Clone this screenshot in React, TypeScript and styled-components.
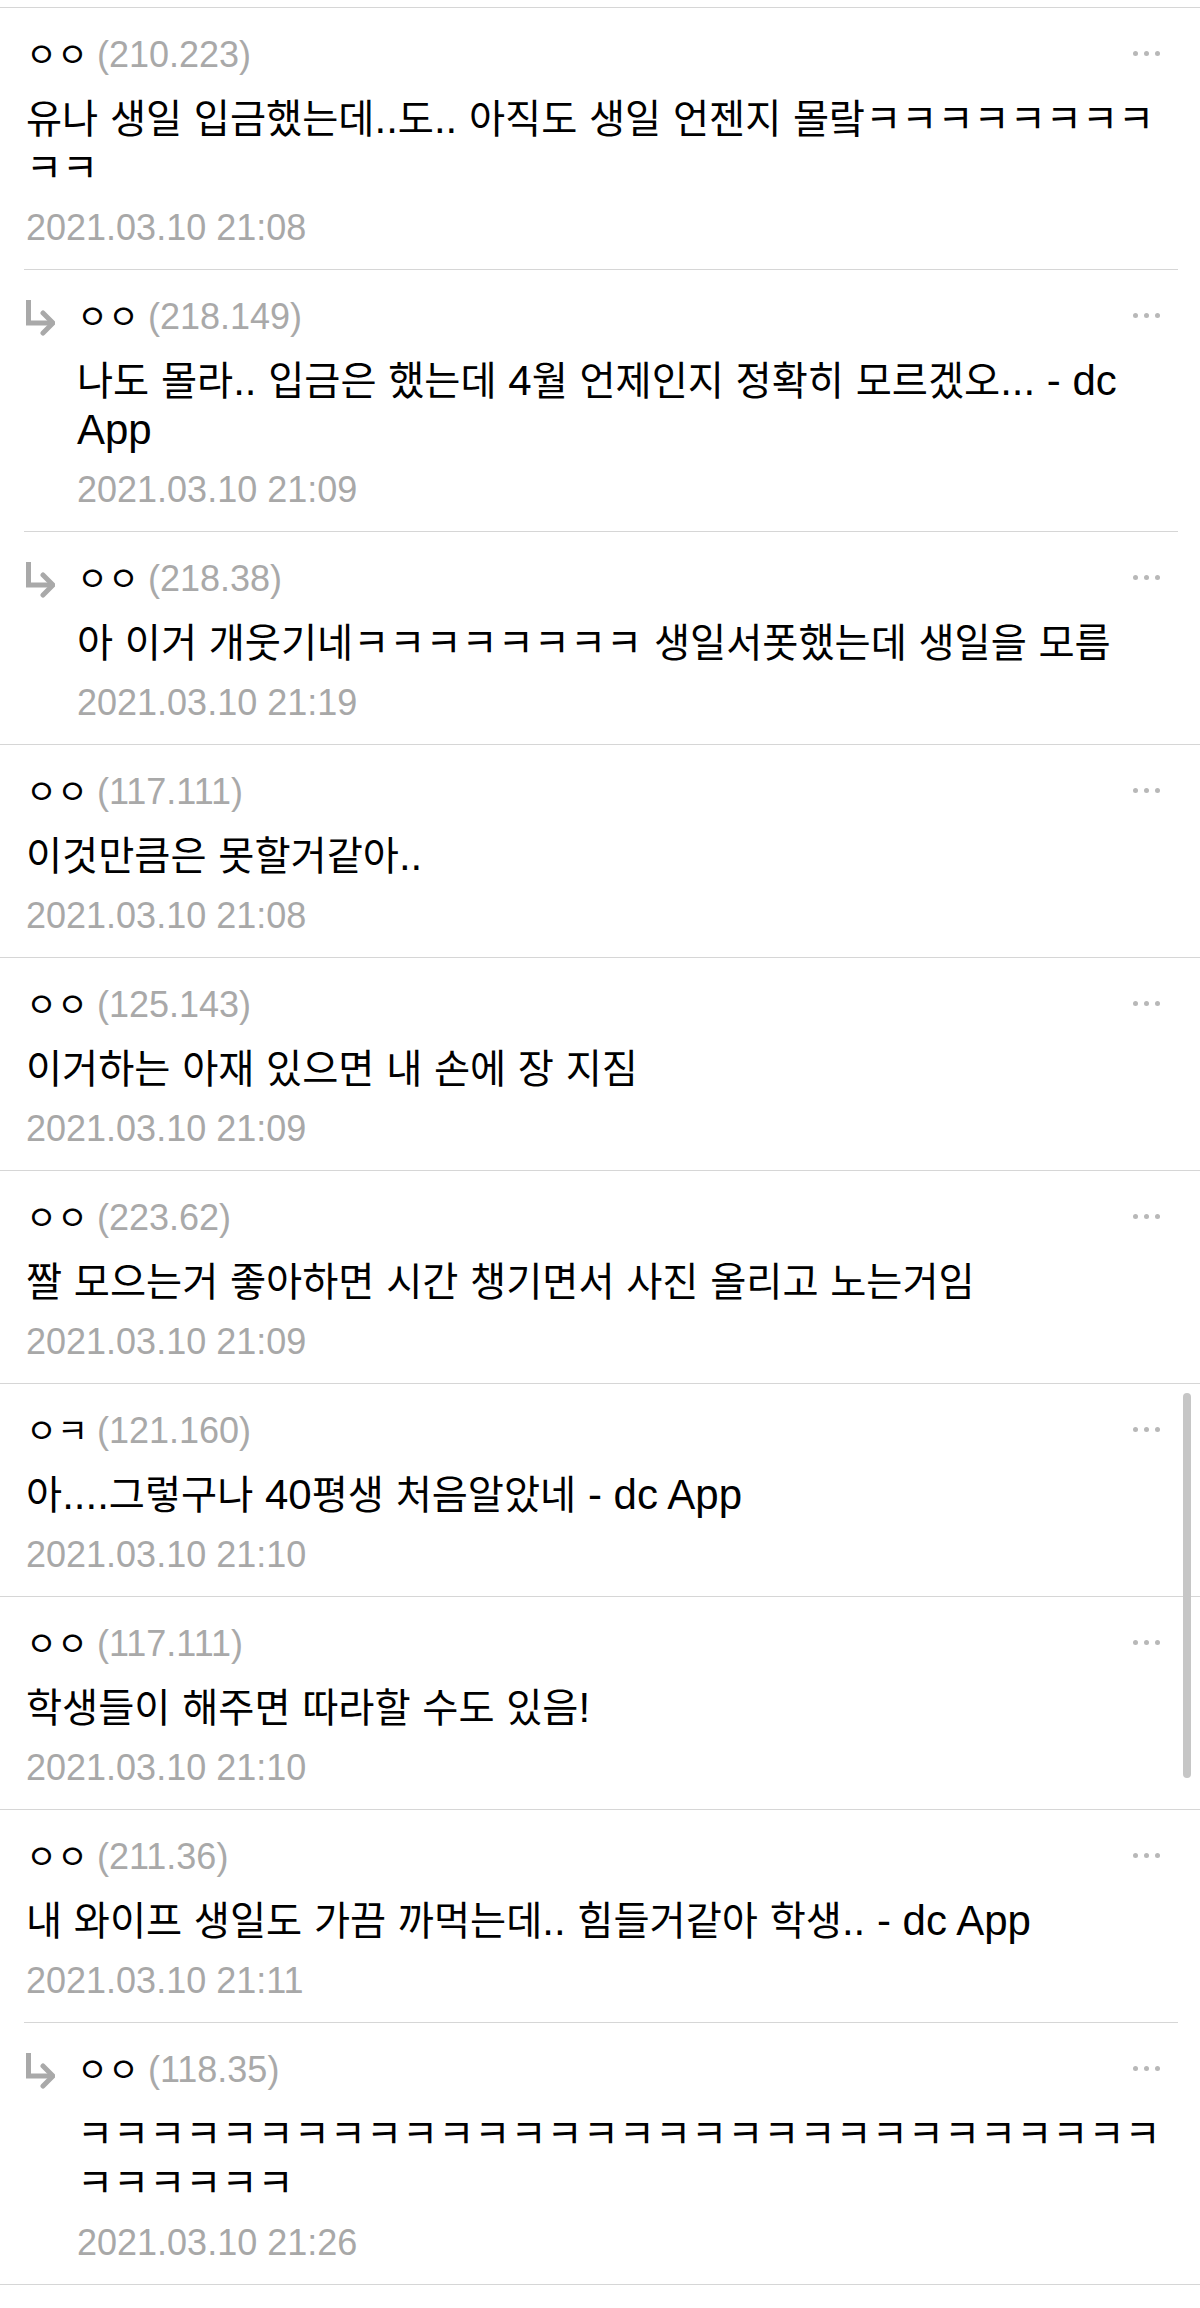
import styled, { createGlobalStyle } from "styled-components";

const GlobalStyle = createGlobalStyle`
  body {
    margin: 0;
    background: #fff;
    font-family: "Liberation Sans", "Noto Sans CJK KR", sans-serif;
    color: #000;
  }
`;

const Page = styled.div`
  position: relative;
  width: 1200px;
  min-height: 2308px;
  padding-top: 7px;
  box-sizing: border-box;
`;

const List = styled.ul`
  list-style: none;
  margin: 0;
  padding: 0;
  border-bottom: 1px solid #d6d6d6;
`;

const Item = styled.li<{ $reply?: boolean }>`
  display: flex;
  border-top: 1px solid #d6d6d6;
  margin: ${(p) => (p.$reply ? "0 22px 0 24px" : "0")};
  padding: ${(p) => (p.$reply ? "24px 14px 19px 0" : "24px 40px 19px 26px")};
`;

const ReplyMark = styled.div`
  flex: 0 0 52px;
  padding-left: 1px;
  padding-top: 6px;
  svg {
    display: block;
  }
`;

const Body = styled.div`
  flex: 1;
  min-width: 0;
`;

const Header = styled.div<{ $reply?: boolean }>`
  display: flex;
  align-items: center;
  height: 46px;
  font-size: 36px;
  line-height: 46px;
  padding-right: ${(p) => (p.$reply ? "4px" : "0")};
`;

const Name = styled.span`
  color: #000;
`;

const Ip = styled.span`
  margin-left: 9px;
  color: #a9a9a9;
`;

const More = styled.button`
  margin-left: auto;
  display: flex;
  gap: 6px;
  padding: 0;
  border: 0;
  background: none;
  margin-top: -4px;
  span {
    width: 5px;
    height: 5px;
    border-radius: 50%;
    background: #b8b8b8;
  }
`;

const Content = styled.p`
  margin: 16px 0 0;
  font-size: 42px;
  line-height: 49px;
  color: #000;
`;

const Hangul = styled.span`
  font-family: "Noto Sans CJK KR", sans-serif;
  font-size: 0.935em;
  line-height: 1;
`;

const Date = styled.div`
  margin-top: 14px;
  font-size: 36px;
  line-height: 44px;
  color: #a8a8a8;
`;

const Scrollbar = styled.div`
  position: absolute;
  left: 1183px;
  top: 1393px;
  width: 8px;
  height: 385px;
  border-radius: 4px;
  background: #c6c6c6;
`;

interface CommentData {
  name: string;
  ip: string;
  text: string;
  date: string;
  reply?: boolean;
}

const comments: CommentData[] = [
  {
    name: "ㅇㅇ",
    ip: "210.223",
    text: "유나 생일 입금했는데..도.. 아직도 생일 언젠지 몰랔ㅋㅋㅋㅋㅋㅋㅋㅋㅋㅋ",
    date: "2021.03.10 21:08",
  },
  {
    name: "ㅇㅇ",
    ip: "218.149",
    text: "나도 몰라.. 입금은 했는데 4월 언제인지 정확히 모르겠오... - dc App",
    date: "2021.03.10 21:09",
    reply: true,
  },
  {
    name: "ㅇㅇ",
    ip: "218.38",
    text: "아 이거 개웃기네ㅋㅋㅋㅋㅋㅋㅋㅋ 생일서폿했는데 생일을 모름",
    date: "2021.03.10 21:19",
    reply: true,
  },
  {
    name: "ㅇㅇ",
    ip: "117.111",
    text: "이것만큼은 못할거같아..",
    date: "2021.03.10 21:08",
  },
  {
    name: "ㅇㅇ",
    ip: "125.143",
    text: "이거하는 아재 있으면 내 손에 장 지짐",
    date: "2021.03.10 21:09",
  },
  {
    name: "ㅇㅇ",
    ip: "223.62",
    text: "짤 모으는거 좋아하면 시간 챙기면서 사진 올리고 노는거임",
    date: "2021.03.10 21:09",
  },
  {
    name: "ㅇㅋ",
    ip: "121.160",
    text: "아....그렇구나 40평생 처음알았네 - dc App",
    date: "2021.03.10 21:10",
  },
  {
    name: "ㅇㅇ",
    ip: "117.111",
    text: "학생들이 해주면 따라할 수도 있음!",
    date: "2021.03.10 21:10",
  },
  {
    name: "ㅇㅇ",
    ip: "211.36",
    text: "내 와이프 생일도 가끔 까먹는데.. 힘들거같아 학생.. - dc App",
    date: "2021.03.10 21:11",
  },
  {
    name: "ㅇㅇ",
    ip: "118.35",
    text: "ㅋ".repeat(36),
    date: "2021.03.10 21:26",
    reply: true,
  },
];

// hangul runs get their own span so the latin text keeps its size
function withHangul(text: string) {
  return text
    .split(/([\u1100-\u11FF\u3130-\u318F\uAC00-\uD7AF]+)/)
    .map((part, i) => (i % 2 ? <Hangul key={i}>{part}</Hangul> : part));
}

function ReplyArrow() {
  return (
    <svg width="30" height="36" viewBox="0 0 30 36" fill="none">
      <path d="M3.5 0V23H27" stroke="#a9a9a9" strokeWidth="5" />
      <path
        d="M18 13L28 23L18 33"
        stroke="#a9a9a9"
        strokeWidth="5"
        strokeLinecap="round"
        strokeLinejoin="round"
      />
    </svg>
  );
}

function Comment({ c }: { c: CommentData }) {
  return (
    <Item $reply={c.reply}>
      {c.reply && (
        <ReplyMark>
          <ReplyArrow />
        </ReplyMark>
      )}
      <Body>
        <Header $reply={c.reply}>
          <Name>{withHangul(c.name)}</Name>
          <Ip>({c.ip})</Ip>
          <More aria-label="more">
            <span />
            <span />
            <span />
          </More>
        </Header>
        <Content>{withHangul(c.text)}</Content>
        <Date>{c.date}</Date>
      </Body>
    </Item>
  );
}

export default function App() {
  return (
    <Page>
      <GlobalStyle />
      <List>
        {comments.map((c, i) => (
          <Comment key={i} c={c} />
        ))}
      </List>
      <Scrollbar />
    </Page>
  );
}
